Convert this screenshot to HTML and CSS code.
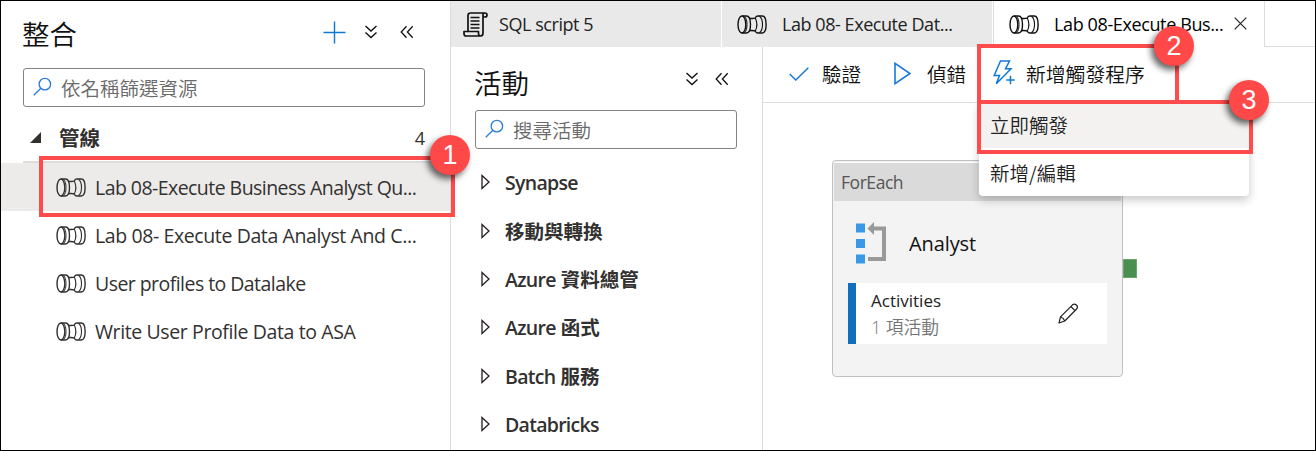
FILE: index.html
```html
<!DOCTYPE html>
<html lang="zh-Hant">
<head>
<meta charset="utf-8">
<title>Synapse</title>
<link rel="stylesheet" href="styles.css">
</head>
<body>
<svg width="0" height="0" class="defs">
  <symbol id="pipe" viewBox="0 0 30 19">
    <g fill="none" stroke="currentColor" stroke-width="1.4">
      <ellipse cx="4.900" cy="9.500" rx="3.900" ry="8.500"/>
      <path d="M4.900 1H9.500C12 1 13.500 4.800 13.500 9.500S12 18 9.500 18H4.900"/>
      <path d="M7.500 1.300C9.400 3 10 6 10 9.500S9.400 16 7.500 17.700" stroke-width="1"/>
      <path d="M12 3.200Q15.500 4 19 2.800M12 15.800Q15.500 15 19 16.200"/>
      <path d="M18.300 2.800Q19.200 1 21 1H25.300C27.700 1 29.100 4.800 29.100 9.500S27.700 18 25.300 18H21Q19.200 18 18.300 16.200"/>
      <path d="M18.200 3C20.300 7 20.300 12 18.200 16M22.500 1.200C25 3 25.500 6 25.500 9.500S25 16 22.500 17.800" stroke-width="1.100"/>
    </g>
  </symbol>
  <symbol id="down2" viewBox="0 0 14 14"><path d="M1.500 1L7 6L12.500 1M1.500 7.500L7 12.500L12.500 7.500" fill="none" stroke="currentColor" stroke-width="1.400"/></symbol>
  <symbol id="left2" viewBox="0 0 14 14"><path d="M6.500 1.300L1.200 7L6.500 12.700M12.700 1.300L7.400 7L12.700 12.700" fill="none" stroke="currentColor" stroke-width="1.300"/></symbol>
  <symbol id="search" viewBox="0 0 20 20"><g fill="none" stroke="#2a7cd8" stroke-width="1.400"><circle cx="12.500" cy="7.500" r="6"/><path d="M8.300 11.800L.8 19.200"/></g></symbol>
  <symbol id="caret" viewBox="0 0 9 16"><path d="M1 1.500V14.500L8 8Z" fill="none" stroke="#231d1c" stroke-width="1.300"/></symbol>
</svg>
<div class="app">
  <aside class="side">
    <header class="side-head">
      <h1>整合</h1>
      <svg class="plus" viewBox="0 0 24 24"><path d="M12 .5V23.500M.5 12H23.500" stroke="#0f78d4" stroke-width="1.500"/></svg>
      <svg class="chev"><use href="#down2"/></svg>
      <svg class="chev last"><use href="#left2"/></svg>
    </header>
    <div class="search"><svg><use href="#search"/></svg><span>依名稱篩選資源</span></div>
    <div class="group">
      <svg viewBox="0 0 12 12"><path d="M12 0V12H0Z" fill="#323130"/></svg>
      <b>管線</b><span class="count">4</span>
    </div>
    <ul class="files">
      <li class="on"><svg><use href="#pipe"/></svg><span class="tight">Lab 08-Execute Business Analyst Qu...</span></li>
      <li><svg><use href="#pipe"/></svg><span>Lab 08- Execute Data Analyst And C...</span></li>
      <li><svg><use href="#pipe"/></svg><span class="tight">User profiles to Datalake</span></li>
      <li><svg><use href="#pipe"/></svg><span>Write User Profile Data to ASA</span></li>
    </ul>
  </aside>
  <main>
    <nav class="tabs">
      <div class="tab script">
        <svg viewBox="0 0 25 25"><g fill="none" stroke="#111" stroke-width="1.700" stroke-linejoin="round"><path d="M5 19V3.500Q5 1 7.500 1H22Q24 1 24 3T22 5H20V21Q20 24 17.500 24H3Q1 24 1 21.500V19.500H15.500V21.500Q15.500 24 17.500 24M20 5V3Q20 1 22 1"/><path d="M7.500 5.500H16.500M7.500 9H16.500M7.500 12.500H16.500M7.500 16H16.500" stroke-width="1.500"/></g></svg>
        <span>SQL script 5</span>
      </div>
      <div class="tab"><svg class="p"><use href="#pipe"/></svg><span>Lab 08- Execute Dat...</span></div>
      <div class="tab active"><svg class="p"><use href="#pipe"/></svg><span>Lab 08-Execute Bus...</span>
        <svg class="x" viewBox="0 0 13 13"><path d="M.7.7L12.300 12.300M12.300.7L.7 12.300" stroke="#222" stroke-width="1.200"/></svg></div>
      <div class="rest"></div>
    </nav>
    <div class="work">
      <section class="acts">
        <header class="acts-head"><h2>活動</h2><svg class="chev"><use href="#down2"/></svg><svg class="chev last"><use href="#left2"/></svg></header>
        <div class="search"><svg><use href="#search"/></svg><span>搜尋活動</span></div>
        <ul class="cats">
          <li><svg><use href="#caret"/></svg><span><em>Synapse</em></span></li>
          <li><svg><use href="#caret"/></svg><span>移動與轉換</span></li>
          <li><svg><use href="#caret"/></svg><span><em>Azure</em> 資料總管</span></li>
          <li><svg><use href="#caret"/></svg><span><em>Azure</em> 函式</span></li>
          <li><svg><use href="#caret"/></svg><span><em>Batch</em> 服務</span></li>
          <li><svg><use href="#caret"/></svg><span><em>Databricks</em></span></li>
        </ul>
      </section>
      <section class="canvas">
        <div class="toolbar">
          <svg class="ok" viewBox="0 0 20 14"><path d="M.7 7L6.800 13L19.300.7" fill="none" stroke="#1879d6" stroke-width="1.500"/></svg><span>驗證</span>
          <svg class="play" viewBox="0 0 17 23"><path d="M1 1.300V21.700L16 11.500Z" fill="none" stroke="#1879d6" stroke-width="1.600"/></svg><span>偵錯</span>
          <svg class="bolt" viewBox="0 0 22 25"><g fill="none" stroke="#0f7bd8" stroke-width="1.500"><path d="M7.500 1H16.500L12.500 8.800H18L3.300 23.800L6.500 15.500H1.200Z"/><path d="M17.500 15.800V24.200M13.300 20H21.700"/></g></svg><span class="add">新增觸發程序</span>
        </div>
      </section>
    </div>
  </main>
  <article class="node">
    <header>ForEach</header>
    <div class="title">
      <svg viewBox="0 0 31 43"><g fill="#3999e6"><path d="M0 1.500H9V10.500H0ZM0 17H9V26H0ZM0 32.500H9V41.500H0Z"/></g><path d="M17 6.500H28V37H12" fill="none" stroke="#999" stroke-width="4"/><path d="M11.500 6.500L18 0V13Z" fill="#999"/></svg>
      <span>Analyst</span>
    </div>
    <div class="inner">
      <div><p>Activities</p><p class="n">1 項活動</p></div>
      <svg viewBox="0 0 20 21"><g fill="none" stroke="#222" stroke-width="1.200" stroke-linejoin="round"><path d="M1 20L2.500 13.800L14.500 1.800Q16.500 .2 18.400 2T18.600 6L6.800 18Z"/><path d="M12.800 3.500L17 7.700M2.500 13.800Q5.500 14.800 6.800 18"/></g></svg>
    </div>
    <i class="port"></i>
  </article>
  <div class="menu"><div class="sel">立即觸發</div><div>新增/編輯</div></div>
  <div class="mark m1"></div><div class="mark m2"></div><div class="mark m3"></div>
  <div class="badge b1">1</div><div class="badge b2">2</div><div class="badge b3">3</div>
</div>
</body>
</html>
```
FILE: styles.css
```css
* { box-sizing: border-box; margin: 0; padding: 0; }
body { width: 1316px; height: 451px; overflow: hidden; background: #fff; color: #323130; font: 19.5px/24px "Open Sans", "Noto Sans CJK TC", sans-serif; }
.defs { position: absolute; }
svg { display: block; flex: none; }
ul { list-style: none; }
em { font-style: normal; letter-spacing: -.72px; }
span, b, p, .menu div { white-space: nowrap; }
.app { position: relative; display: flex; width: 1316px; height: 451px; border: 1px solid #000; overflow: hidden; }

.side { width: 450px; flex: none; border-right: 1px solid #dcdcdc; }
.side-head { display: flex; align-items: center; height: 67px; padding: 0 0 5px 21px; }
h1, h2 { font: 350 27.5px/34px "Noto Sans CJK TC", sans-serif; color: #111; }
h1 { margin-right: auto; padding-top: 2px; }
.plus { width: 23px; height: 23px; margin-right: 18px; }
.chev { width: 14px; height: 14px; color: #111; }
.side-head .chev.last { margin: 0 36px 0 22px; }
.search { display: flex; align-items: center; height: 39px; border: 1px solid #85827f; border-radius: 3px; padding-left: 9px; font-family: "Noto Sans CJK TC", sans-serif; font-weight: 350; color: #6a6a6a; }
.search svg { width: 19px; height: 19px; margin: -2px 9px 0 0; }
.side .search { margin: 0 25px 0 22px; }
.group { display: flex; align-items: center; height: 56px; margin-left: 22px; padding: 7px 25px 0 7px; border-bottom: 2px solid #dcdcdc; font-size: 20.5px; }
.group svg { width: 11px; height: 11px; margin-right: 18px; }
.count { margin-left: auto; font-size: 18px; font-weight: 500; }
.files li { display: flex; align-items: center; height: 48px; padding: 2px 0 0 55px; }
.files li.on { background: #edebe9; }
.files svg { width: 30px; height: 19px; margin: -2px 9px 0 0; }
.files span { letter-spacing: -.39px; }
.files .tight { letter-spacing: -.55px; }

main { flex: 1; display: flex; flex-direction: column; }
.tabs { display: flex; height: 46px; font-size: 18px; color: #222; }
.tab { display: flex; align-items: center; width: 271px; background: #e9e9e9; border-right: 1px solid #fff; padding-left: 15px; letter-spacing: -.44px; }
.tab svg { color: #111; }
.tab span { margin-top: -1px; }
.tab .p { width: 30px; height: 19px; margin-right: 15px; }
.script { padding-left: 12px; }
.script svg { width: 25px; height: 25px; margin-right: 11px; }
.active { width: 271px; background: #fff; border-left: 1px solid #dcdcdc; border-right: 0; color: #000; letter-spacing: -.38px; }
.active span { font-weight: 500; }
.active .x { width: 13px; height: 13px; margin: -2px 0 0 11px; }
.rest { flex: 1; border-left: 1px solid #dcdcdc; border-bottom: 1px solid #dcdcdc; }
.work { flex: 1; display: flex; }
.acts { width: 312px; border-right: 1px solid #dcdcdc; padding: 0 25px 0 24px; }
.acts-head { display: flex; align-items: center; height: 63px; padding-top: 6px; }
.acts-head h2 { margin: 0 auto 0 -1px; }
.acts-head .chev { margin-top: -6px; }
.acts-head .last { margin-left: 16px; margin-right: 8px; }
.cats { padding-top: 10px; }
.cats li { display: flex; align-items: center; height: 48.4px; padding-left: 6px; font-weight: 600; }
.cats svg { width: 9px; height: 16px; margin: -2px 15px 0 0; }
.canvas { flex: 1; }
.toolbar { display: flex; align-items: center; height: 56px; border-bottom: 1px solid #dcdcdc; padding: 0 0 2px 26px; font-family: "Noto Sans CJK TC", sans-serif; font-weight: 350; color: #111; }
.ok { width: 20px; height: 14px; margin-right: 13px; }
.play { width: 17px; height: 23px; margin: 0 16px 0 33px; }
.bolt { width: 22px; height: 25px; margin: -2px 11px 0 27px; }
.add { font-size: 19.8px; }

.node { position: absolute; left: 831px; top: 159px; width: 291px; height: 217px; border: 1px solid #c0c0c0; border-radius: 4px; background: #f3f3f3; padding: 1px; }
.node header { height: 39px; border-top: 1px solid #fff; background: #dadada; padding: 7px 0 0 7px; font-size: 17.5px; line-height: 24px; letter-spacing: -.45px; color: #555; }
.title { display: flex; align-items: center; height: 82px; padding: 3px 0 0 22px; font-size: 20px; color: #111; letter-spacing: -.1px; }
.title svg { width: 31px; height: 43px; margin-right: 22px; }
.inner { display: flex; align-items: center; justify-content: space-between; width: 259px; height: 61px; margin-left: 14px; background: #fff; border-left: 8px solid #106ebe; padding: 0 29px 0 15px; font-size: 17px; line-height: 27px; color: #222; }
.inner .n { color: #757575; font-weight: 350; font-size: 17.8px; }
.inner svg { width: 20px; height: 21px; }
.port { position: absolute; left: 290px; top: 98px; width: 14px; height: 19px; background: #498f50; border: 1px solid #6aa56f; }
.menu { position: absolute; left: 978px; top: 102px; width: 270px; height: 93px; background: #fff; border-radius: 4px; box-shadow: 0 4px 10px rgba(0,0,0,.22); font-family: "Noto Sans CJK TC", sans-serif; font-weight: 350; color: #222; line-height: 43px; }
.menu div { padding-left: 11px; height: 48px; }
.menu .sel { height: 45px; margin-bottom: 3px; background: #f3f2f1; }
.mark { position: absolute; border: 4px solid #ff4b4b; }
.m1 { left: 38px; top: 155px; width: 416px; height: 61px; }
.m2 { left: 976px; top: 43px; width: 202px; height: 60px; }
.m3 { left: 976px; top: 99px; width: 276px; height: 54px; }
.badge { position: absolute; width: 40px; height: 40px; border-radius: 50%; background: #ff4848; color: #fff; text-align: center; font: 27px/40px "Liberation Sans", sans-serif; box-shadow: -3px 4px 6px rgba(0,0,0,.6); }
.b1 { left: 429px; top: 134px; }
.b2 { left: 1153px; top: 25px; }
.b3 { left: 1228px; top: 79px; }
```
